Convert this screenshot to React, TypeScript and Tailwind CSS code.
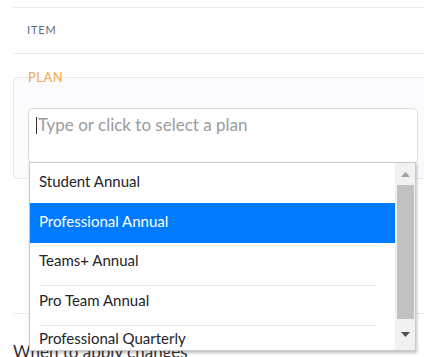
const plans = [
  { name: "Student Annual", active: false },
  { name: "Professional Annual", active: true },
  { name: "Teams+ Annual", active: false },
  { name: "Pro Team Annual", active: false },
  { name: "Professional Quarterly", active: false },
];

const App = () => {
  return (
    <div className="relative w-[424px] h-[357px] overflow-hidden bg-white font-['Lato','Liberation_Sans',sans-serif] text-[#212529]">
      <div className="pt-[7px]">
        {/* Item row */}
        <div className="ml-[13px] h-[47px] border-y border-[#ececec] flex items-center pl-[14px]">
          <span className="text-[11px] tracking-[0.08em] text-[#5d6b80]">ITEM</span>
        </div>

        {/* Plan fieldset */}
        <fieldset className="ml-[13px] w-[420px] mt-[16px] border border-[#e8e8ec] rounded-[5px] bg-[#fbfbfd] px-[14px] pb-[14px]">
          <legend className="text-[13px] leading-[14px] tracking-[0.04em] text-[#eeaa4f]">PLAN</legend>
          <div className="mt-[24px] h-[56px] rounded-[5px] border border-[#dcdcdc] bg-white flex items-start pt-[5px] pl-[7px]">
            <span className="w-px h-[17px] bg-[#333] mt-[3px]" />
            <span className="ml-[1px] text-[17px] leading-[22px] text-[#9b9b9b]">Type or click to select a plan</span>
          </div>
        </fieldset>

        <div className="ml-[13px] mt-[134px] border-t border-[#ececec]" />
        <div className="ml-[13px] mt-[26px] text-[17px] leading-[24px] text-[#333]">When to apply changes</div>
      </div>

      {/* Dropdown menu */}
      <div className="absolute left-[29px] top-[162px] w-[387px] h-[189px] bg-white border border-[#c9c9c9] shadow-[1px_2px_3px_rgba(0,0,0,0.25)] flex">
        <ul className="flex-1 overflow-hidden">
          {plans.map((plan, i) => (
            <li key={plan.name}>
              {i > 1 && <div className="ml-[9px] w-[337px] h-px bg-[#ebebeb] mt-[2px]" />}
              {i <= 1 ? (
                <div
                  className={`h-[40px] flex items-center pl-[9px] pb-[4px] text-[15px] ${
                    plan.active ? "bg-[#007bff] text-white" : "text-[#212529]"
                  }`}
                >
                  {plan.name}
                </div>
              ) : (
                <div className={`h-[37px] pl-[9px] text-[15px] leading-[20px] ${i === 4 ? "pt-[2px]" : "pt-[4px]"}`}>
                  {plan.name}
                </div>
              )}
            </li>
          ))}
        </ul>
        {/* Scrollbar */}
        <div className="w-[20px] bg-[#f1f1f1] flex flex-col items-center">
          <div className="h-[22px] flex items-center justify-center">
            <svg width="9" height="5" viewBox="0 0 9 5">
              <path d="M4.5 0L9 5H0z" fill="#a3a3a3" />
            </svg>
          </div>
          <div className="w-[17px] h-[134px] bg-[#c1c1c1]" />
          <div className="flex-1 flex items-center justify-center">
            <svg width="9" height="5" viewBox="0 0 9 5">
              <path d="M0 0H9L4.5 5z" fill="#505050" />
            </svg>
          </div>
        </div>
      </div>
    </div>
  );
};

export default App;
